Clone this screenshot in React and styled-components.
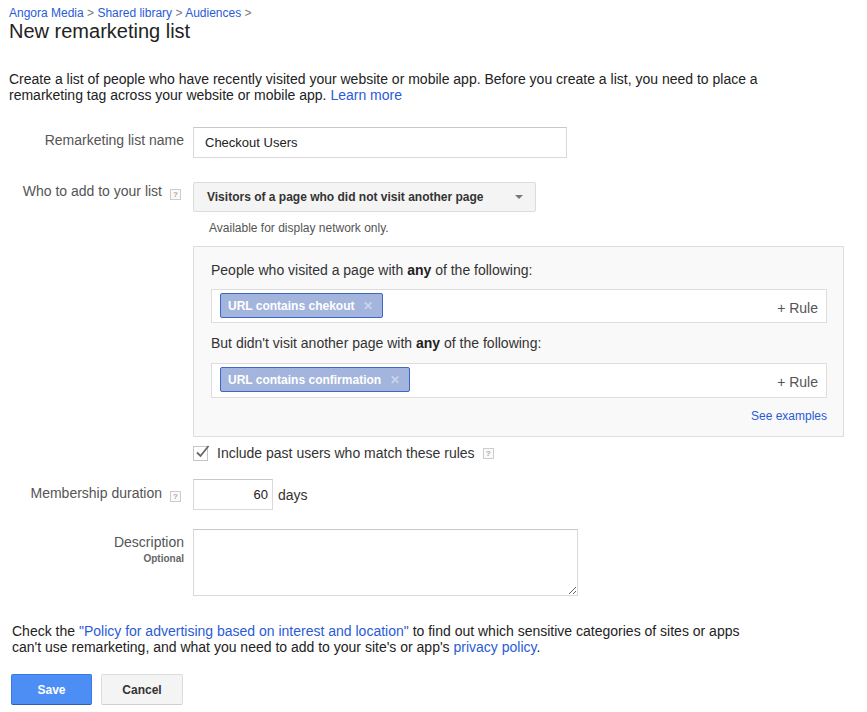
import React from 'react';
import styled, { createGlobalStyle } from 'styled-components';

const GlobalStyle = createGlobalStyle`
  body {
    margin: 0;
    background: #fff;
    font-family: "Liberation Sans", Arial, sans-serif;
    color: #222;
  }
`;

const Page = styled.div`
  width: 867px;
  padding: 8px 0 0 9px;
  box-sizing: border-box;
`;

const Crumbs = styled.div`
  font-size: 12px;
  line-height: 11px;
  color: #777;
  a {
    color: #2a5bd7;
    text-decoration: none;
  }
`;

const Title = styled.h1`
  margin: 0;
  font-size: 20px;
  font-weight: normal;
  line-height: 24px;
  color: #222;
`;

const Intro = styled.p`
  margin: 28px 0 0;
  font-size: 14px;
  line-height: 16px;
  width: 790px;
`;

const Link = styled.a`
  color: #2a5bd7;
  text-decoration: none;
`;

const Row = styled.div`
  display: grid;
  grid-template-columns: 175px 1fr;
  column-gap: 9px;
  margin-top: ${(p) => p.gap}px;
`;

const Label = styled.div`
  text-align: right;
  font-size: 14px;
  line-height: 16px;
  color: #555;
  padding-top: ${(p) => p.pad}px;
`;

const Sub = styled.div`
  font-size: 10px;
  font-weight: bold;
  color: #666;
  margin-top: 1px;
`;

const Help = styled.span`
  display: inline-block;
  width: 11px;
  height: 11px;
  box-sizing: border-box;
  border: 1px solid #ccc;
  background: #fafafa;
  color: #aaa;
  font-size: 8px;
  line-height: 9px;
  text-align: center;
  font-weight: bold;
  vertical-align: -1px;
  margin-left: ${(p) => (p.left ? p.left : 8)}px;
  margin-right: ${(p) => (p.right ? p.right : 0)}px;
`;

const TextInput = styled.input`
  box-sizing: border-box;
  width: ${(p) => p.w}px;
  height: ${(p) => p.h}px;
  border: 1px solid #d9d9d9;
  border-top-color: #c8c8c8;
  padding: 0 11px;
  font-family: inherit;
  font-size: 13px;
  color: #222;
  text-align: ${(p) => (p.right ? 'right' : 'left')};
  outline: none;
`;

const Select = styled.div`
  box-sizing: border-box;
  width: 343px;
  height: 30px;
  display: flex;
  align-items: center;
  justify-content: space-between;
  padding: 0 12px 0 13px;
  background: #f4f4f4;
  border: 1px solid #dcdcdc;
  border-radius: 2px;
  font-size: 12px;
  font-weight: bold;
  color: #333;
`;

const Caret = styled.span`
  width: 0;
  height: 0;
  border-left: 4px solid transparent;
  border-right: 4px solid transparent;
  border-top: 4px solid #777;
`;

const Hint = styled.div`
  margin: 8px 0 0 16px;
  font-size: 12px;
  line-height: 16px;
  color: #555;
`;

const Panel = styled.div`
  box-sizing: border-box;
  width: 651px;
  margin-top: 10px;
  padding: 15px 16px 12px 17px;
  background: #f9f9f9;
  border: 1px solid #ddd;
`;

const PanelText = styled.div`
  font-size: 14px;
  line-height: 16px;
  color: #333;
  margin-top: ${(p) => p.top}px;
  b {
    color: #222;
  }
`;

const RuleBox = styled.div`
  box-sizing: border-box;
  height: ${(p) => p.h}px;
  margin-top: ${(p) => p.top}px;
  display: flex;
  justify-content: space-between;
  align-items: flex-start;
  padding: 3px 8px 0 8px;
  background: #fff;
  border: 1px solid #ddd;
`;

const Chip = styled.span`
  display: inline-flex;
  align-items: center;
  height: 25px;
  box-sizing: border-box;
  padding: 0 9px 0 7px;
  background: #a3b5dc;
  border: 1px solid #3c67c3;
  border-radius: 2px;
  color: #fff;
  font-size: 12px;
  font-weight: bold;
`;

const ChipX = styled.span`
  margin-left: 9px;
  color: #c9d4ec;
  font-size: 12px;
  font-weight: bold;
`;

const AddRule = styled.span`
  margin-top: 7px;
  font-size: 14px;
  line-height: 16px;
  color: #555;
`;

const SeeExamples = styled.div`
  margin-top: 10px;
  text-align: right;
  font-size: 12px;
  line-height: 16px;
  a {
    color: #2a5bd7;
    text-decoration: none;
  }
`;

const CheckRow = styled.div`
  display: flex;
  align-items: center;
  height: 16px;
  margin-top: 8px;
  font-size: 14px;
  line-height: 16px;
  color: #333;
`;

const Box = styled.span`
  position: relative;
  width: 15px;
  height: 15px;
  box-sizing: border-box;
  border: 1px solid #c6c6c6;
  background: #fff;
  margin-right: 9px;
  svg {
    position: absolute;
    left: 1px;
    top: -3px;
  }
`;

const Inline = styled.div`
  display: flex;
  align-items: center;
  font-size: 14px;
  color: #333;
  span {
    margin-left: 5px;
  }
`;

const Area = styled.textarea`
  box-sizing: border-box;
  width: 385px;
  height: 67px;
  border: 1px solid #d9d9d9;
  border-top-color: #c8c8c8;
  font-family: inherit;
  font-size: 13px;
  display: block;
  outline: none;
`;

const Policy = styled.p`
  margin: 27px 0 0 3px;
  font-size: 14px;
  line-height: 16px;
  color: #222;
  width: 760px;
`;

const Buttons = styled.div`
  display: flex;
  gap: 9px;
  margin: 19px 0 0 2px;
`;

const Button = styled.button`
  box-sizing: border-box;
  width: ${(p) => p.w}px;
  height: 31px;
  border-radius: 2px;
  font-family: inherit;
  font-size: 12px;
  font-weight: bold;
  cursor: pointer;
  background: ${(p) => (p.primary ? '#4d8ef5' : '#f4f4f4')};
  color: ${(p) => (p.primary ? '#fff' : '#333')};
  border: 1px solid ${(p) => (p.primary ? '#3b78e7' : '#dcdcdc')};
  border-bottom-color: ${(p) => (p.primary ? '#2f5fb3' : '#d0d0d0')};
`;

const App = () => {
  return (
    <Page>
      <GlobalStyle />
      <Crumbs>
        <a href="#">Angora Media</a> &gt; <a href="#">Shared library</a> &gt;{' '}
        <a href="#">Audiences</a> &gt;
      </Crumbs>
      <Title>New remarketing list</Title>
      <Intro>
        Create a list of people who have recently visited your website or mobile app. Before you
        create a list, you need to place a remarketing tag across your website or mobile app.{' '}
        <Link href="#">Learn more</Link>
      </Intro>

      <Row gap={24}>
        <Label pad={5}>Remarketing list name</Label>
        <div>
          <TextInput w={374} h={31} defaultValue="Checkout Users" />
        </div>
      </Row>

      <Row gap={24}>
        <Label pad={1}>
          Who to add to your list
          <Help right={3}>?</Help>
        </Label>
        <div>
          <Select>
            Visitors of a page who did not visit another page
            <Caret />
          </Select>
          <Hint>Available for display network only.</Hint>
          <Panel>
            <PanelText top={0}>
              People who visited a page with <b>any</b> of the following:
            </PanelText>
            <RuleBox h={34} top={11}>
              <Chip>
                URL contains chekout<ChipX>✕</ChipX>
              </Chip>
              <AddRule>+ Rule</AddRule>
            </RuleBox>
            <PanelText top={12}>
              But didn&apos;t visit another page with <b>any</b> of the following:
            </PanelText>
            <RuleBox h={35} top={12}>
              <Chip>
                URL contains confirmation<ChipX>✕</ChipX>
              </Chip>
              <AddRule>+ Rule</AddRule>
            </RuleBox>
            <SeeExamples>
              <a href="#">See examples</a>
            </SeeExamples>
          </Panel>
          <CheckRow>
            <Box>
              <svg width="15" height="15" viewBox="0 0 15 15">
                <path d="M2 8.5 L5.5 12 L13.5 2" fill="none" stroke="#666" strokeWidth="1.8" />
              </svg>
            </Box>
            Include past users who match these rules
            <Help>?</Help>
          </CheckRow>
        </div>
      </Row>

      <Row gap={18}>
        <Label pad={6}>
          Membership duration
          <Help right={3}>?</Help>
        </Label>
        <Inline>
          <TextInput w={80} h={31} right defaultValue="60" style={{ paddingRight: 4 }} />
          <span>days</span>
        </Inline>
      </Row>

      <Row gap={19}>
        <Label pad={5}>
          Description
          <Sub>Optional</Sub>
        </Label>
        <div>
          <Area />
        </div>
      </Row>

      <Policy>
        Check the <Link href="#">&quot;Policy for advertising based on interest and location&quot;</Link>{' '}
        to find out which sensitive categories of sites or apps can&apos;t use remarketing, and what
        you need to add to your site&apos;s or app&apos;s <Link href="#">privacy policy</Link>.
      </Policy>

      <Buttons>
        <Button primary w={81}>
          Save
        </Button>
        <Button w={82}>Cancel</Button>
      </Buttons>
    </Page>
  );
};

export default App;
